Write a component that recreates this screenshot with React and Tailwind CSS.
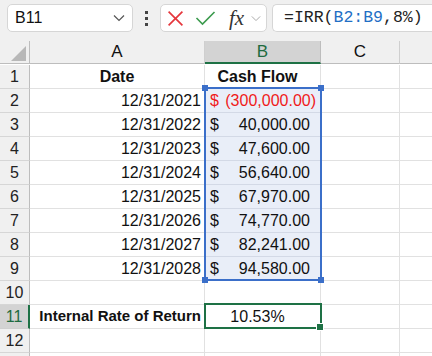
import React from "react";

const rows = [
  { n: 1, a: "Date", b: "Cash Flow", header: true },
  { n: 2, a: "12/31/2021", b: "(300,000.00)", neg: true },
  { n: 3, a: "12/31/2022", b: "40,000.00" },
  { n: 4, a: "12/31/2023", b: "47,600.00" },
  { n: 5, a: "12/31/2024", b: "56,640.00" },
  { n: 6, a: "12/31/2025", b: "67,970.00" },
  { n: 7, a: "12/31/2026", b: "74,770.00" },
  { n: 8, a: "12/31/2027", b: "82,241.00" },
  { n: 9, a: "12/31/2028", b: "94,580.00" },
  { n: 10 },
  { n: 11, irr: true },
  { n: 12 },
  { n: 13, hidden: true },
];

function Chevron({ className }) {
  return (
    <svg viewBox="0 0 12 8" className={className} fill="none" stroke="currentColor" strokeWidth="1.2">
      <polyline points="1,1.5 6,6.5 11,1.5" />
    </svg>
  );
}

export default function App() {
  const font = { fontFamily: '"Liberation Sans", Arial, sans-serif' };
  return (
    <div className="w-[432px] h-[356px] overflow-hidden bg-white text-[#111]" style={font}>
      {/* Toolbar */}
      <div className="h-[41px] bg-[#f0f0f0] flex items-start pt-[4px] pl-[7px] gap-0">
        <div className="w-[126px] h-[28px] bg-white border border-[#d6d6d6] rounded-[5px] flex items-center pl-[7px] pr-[7px]">
          <span className="text-[16px] flex-1">B11</span>
          <Chevron className="w-[12px] h-[8px] text-[#555]" />
        </div>
        <div className="w-[27px] h-[28px] flex flex-col items-center justify-center gap-[3px]">
          <div className="w-[3px] h-[3px] bg-[#444]" />
          <div className="w-[3px] h-[3px] bg-[#444]" />
          <div className="w-[3px] h-[3px] bg-[#444]" />
        </div>
        <div className="w-[107px] h-[28px] bg-white border border-[#d6d6d6] rounded-[5px] flex items-center pl-[6px]">
          <svg viewBox="0 0 16 16" className="w-[17px] h-[17px]" fill="none" stroke="#e5363c" strokeWidth="1.6">
            <line x1="1.5" y1="1.5" x2="14.5" y2="14.5" />
            <line x1="14.5" y1="1.5" x2="1.5" y2="14.5" />
          </svg>
          <svg viewBox="0 0 20 16" className="w-[21px] h-[16px] ml-[11px]" fill="none" stroke="#3c9b4e" strokeWidth="1.6">
            <polyline points="1,8 7,14 19,2" />
          </svg>
          <span
            className="ml-[13px] text-[21px] italic text-[#333] leading-none"
            style={{ fontFamily: '"Liberation Serif", "Times New Roman", serif' }}
          >
            fx
          </span>
          <Chevron className="w-[10px] h-[7px] ml-[7px] text-[#aaa]" />
        </div>
        <div className="flex-1 ml-[5px] h-[28px] bg-white border border-r-0 border-[#d6d6d6] rounded-l-[5px] flex items-center pl-[11px]">
          <span className="text-[16.5px] text-[#222]" style={{ fontFamily: '"Liberation Mono", "Courier New", monospace' }}>
            =IRR(<span className="text-[#1f6fc5]">B2:B9</span>,8%)
          </span>
        </div>
      </div>

      {/* Sheet */}
      <div className="relative">
        <div className="grid grid-cols-[30px_175px_116px_79px_1fr] auto-rows-[24px]">
          {/* Header row */}
          <div className="h-[23px] bg-[#f0f0f0] border-r border-b border-[#bdbdbd] relative">
            <svg viewBox="0 0 15 15" className="absolute left-[11px] top-[5px] w-[15px] h-[15px]">
              <polygon points="15,0 15,15 0,15" fill="#b8b8b8" />
            </svg>
          </div>
          <div className="h-[23px] bg-[#f0f0f0] border-r border-b border-[#cfcfcf] border-b-[#bdbdbd] flex items-center justify-center text-[17px]">A</div>
          <div className="h-[23px] bg-[#d3d3d3] border-r border-[#bdbdbd] border-b-2 border-b-[#1e7145] flex items-center justify-center text-[17px] text-[#1e6b40]">B</div>
          <div className="h-[23px] bg-[#f0f0f0] border-r border-b border-[#cfcfcf] border-b-[#bdbdbd] flex items-center justify-center text-[17px]">C</div>
          <div className="h-[23px] bg-[#f0f0f0] border-b border-[#bdbdbd]" />

          {rows.map((r) => (
            <React.Fragment key={r.n}>
              <div
                className={
                  r.irr
                    ? "bg-[#d3d3d3] border-r-2 border-r-[#1e7145] border-b border-b-[#cfcfcf] flex items-center justify-center text-[16px] text-[#1e6b40]"
                    : "bg-[#f0f0f0] border-r border-r-[#bdbdbd] border-b border-b-[#d6d6d6] flex items-center justify-center text-[16px] text-[#222]"
                }
              >
                {r.hidden ? "" : r.n}
              </div>
              <div
                className={
                  "border-r border-b border-[#e1e1e1] flex items-center " +
                  (r.header
                    ? "justify-center font-bold text-[16px]"
                    : r.irr
                    ? "justify-end pr-[3px] font-bold whitespace-nowrap text-[15px]"
                    : "justify-end pr-[3px] text-[16px]")
                }
              >
                {r.irr ? "Internal Rate of Return" : r.a}
              </div>
              <div
                className={
                  "border-r border-b flex items-center text-[16px] " +
                  (r.b && !r.header ? "bg-[#e9eef8] border-[#d3d9e6] " : "border-[#e1e1e1] ") +
                  (r.header ? "justify-center font-bold" : r.irr ? "justify-center" : "justify-between pl-[5px]") +
                  (r.neg ? " text-[#f01a1a] pr-[4px]" : " pr-[10px]")
                }
              >
                {r.header ? r.b : r.irr ? "10.53%" : r.b ? (
                  <>
                    <span>$</span>
                    <span>{r.b}</span>
                  </>
                ) : null}
              </div>
              <div className="border-r border-b border-[#e1e1e1]" />
              <div className="border-b border-[#e1e1e1]" />
            </React.Fragment>
          ))}
        </div>

        {/* Blue reference range B2:B9 */}
        <div className="absolute left-[204px] top-[46px] w-[118px] h-[194px] border-2 border-[#3b6fc9] pointer-events-none">
          <div className="absolute -left-[4px] -top-[4px] w-[6px] h-[6px] bg-[#3b6fc9]" />
          <div className="absolute -right-[4px] -top-[4px] w-[6px] h-[6px] bg-[#3b6fc9]" />
          <div className="absolute -left-[4px] -bottom-[4px] w-[6px] h-[6px] bg-[#3b6fc9]" />
          <div className="absolute -right-[4px] -bottom-[4px] w-[6px] h-[6px] bg-[#3b6fc9]" />
        </div>

        {/* Active cell B11 */}
        <div className="absolute left-[204px] top-[262px] w-[118px] h-[26px] border-2 border-[#1e7145] pointer-events-none">
          <div className="absolute -right-[4px] -bottom-[4px] w-[6px] h-[6px] bg-[#1e7145] border border-white box-content" />
        </div>
      </div>
    </div>
  );
}
